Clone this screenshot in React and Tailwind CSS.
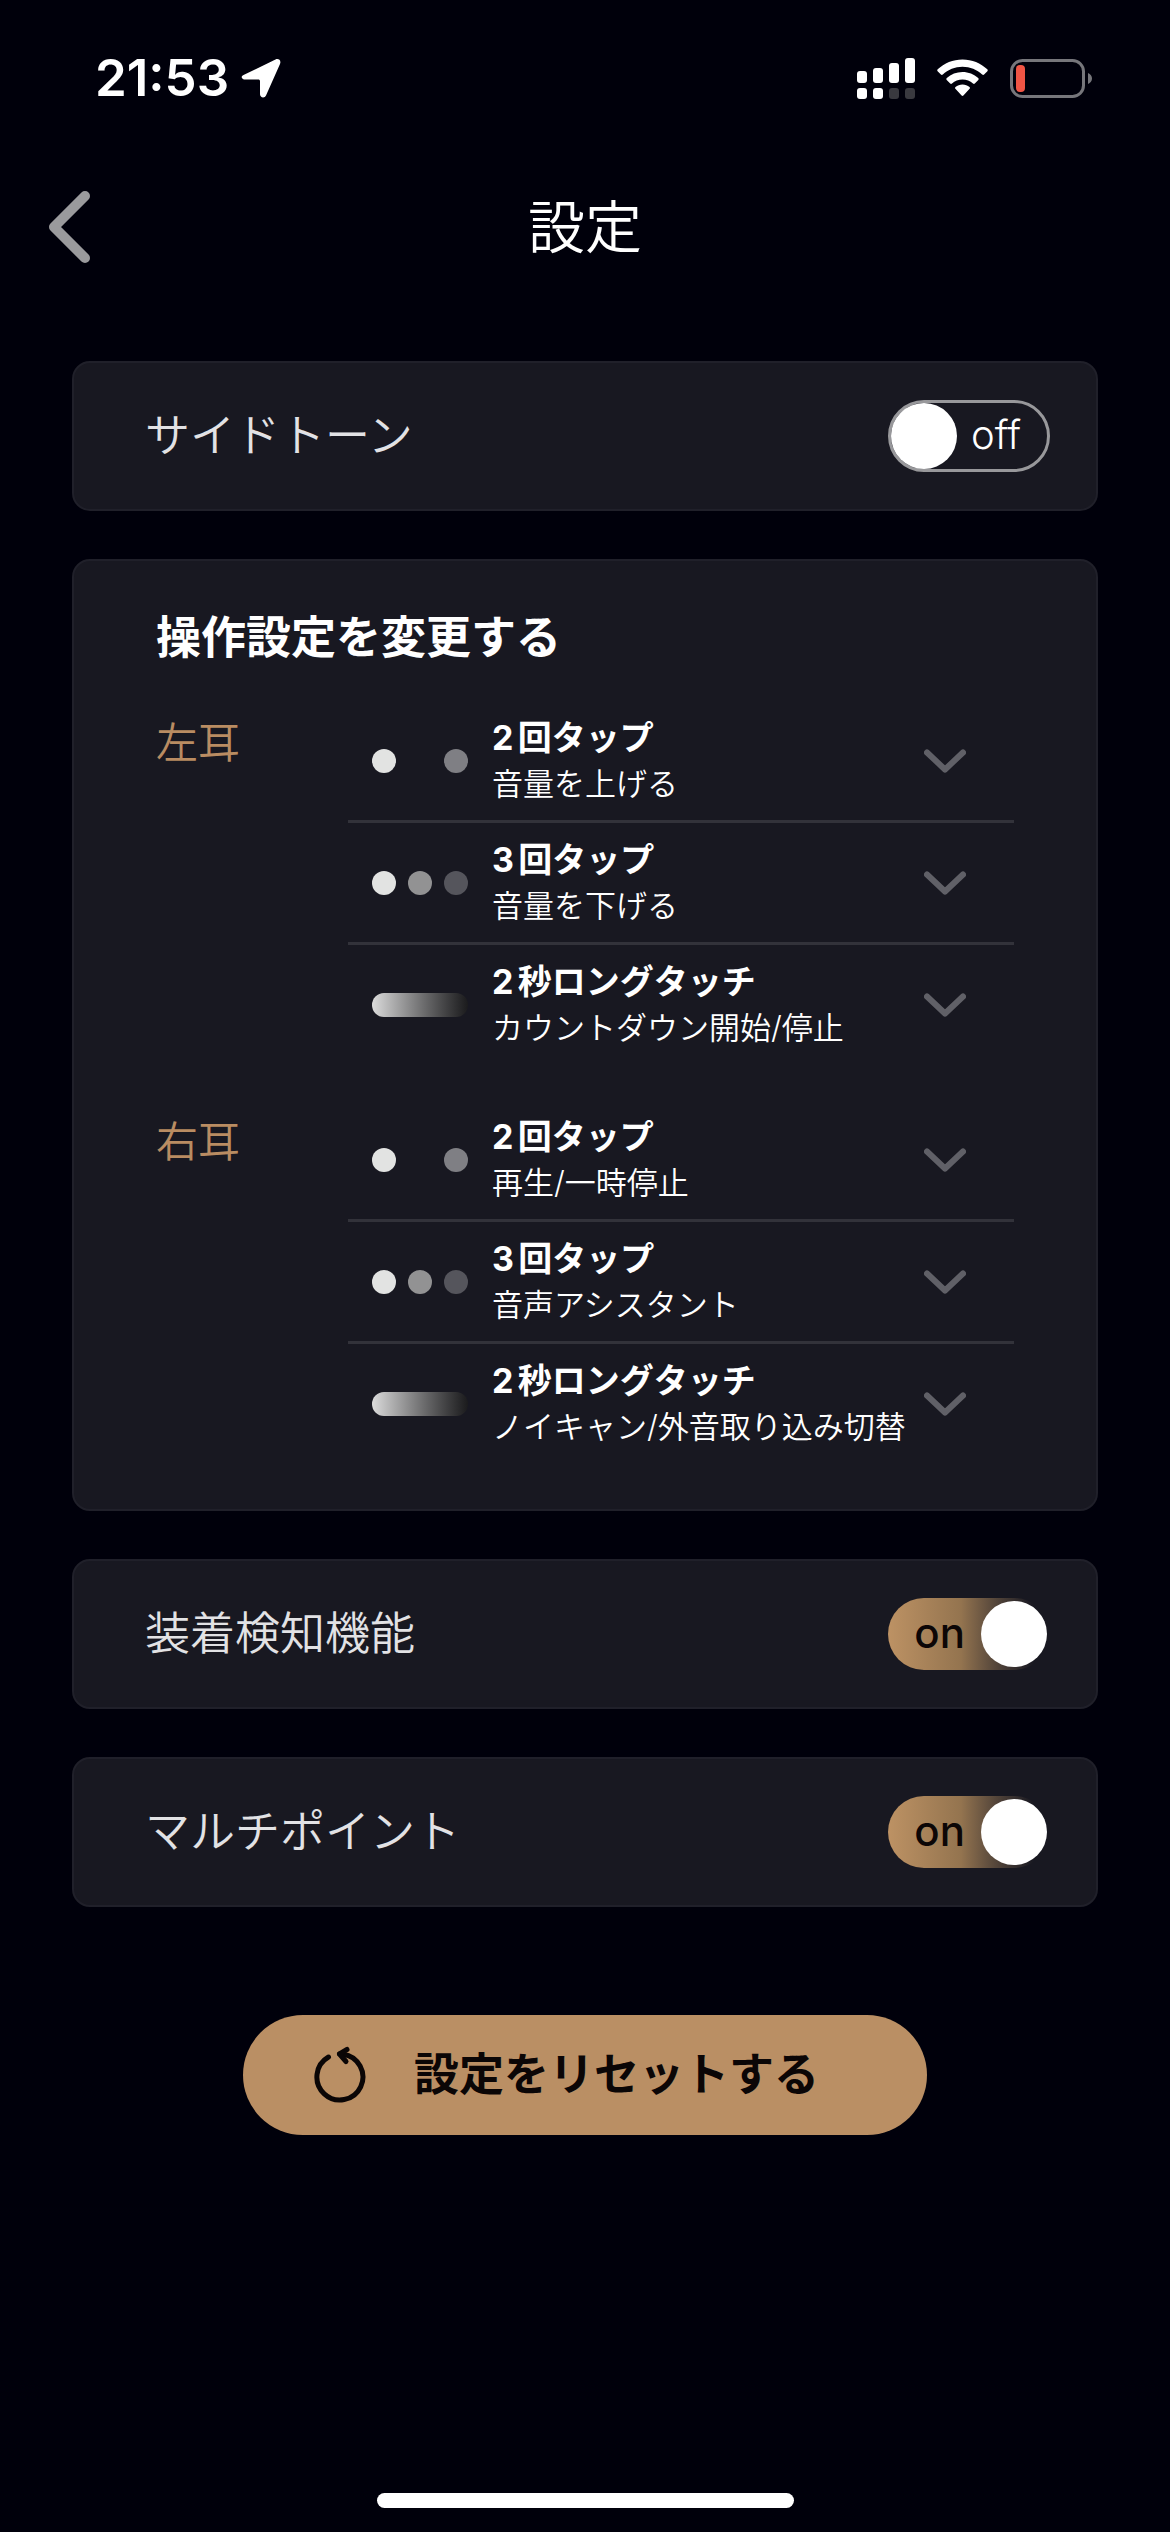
import React, { useState } from 'react';

const leftEar = [
  { icon: 'double', title: '2回タップ', action: '音量を上げる' },
  { icon: 'triple', title: '3回タップ', action: '音量を下げる' },
  { icon: 'long', title: '2秒ロングタッチ', action: 'カウントダウン開始/停止' },
];

const rightEar = [
  { icon: 'double', title: '2回タップ', action: '再生/一時停止' },
  { icon: 'triple', title: '3回タップ', action: '音声アシスタント' },
  { icon: 'long', title: '2秒ロングタッチ', action: 'ノイキャン/外音取り込み切替' },
];

const StatusBar = () => (
  <div className="flex items-center justify-between pt-12 pr-[78px] pl-[95px] text-white">
    <div className="flex items-center gap-3">
      <span className="text-[51px] leading-[60px] font-semibold">21:53</span>
      <svg className="h-10 w-10" viewBox="0 0 40 40" fill="currentColor">
        <path d="M2.500 17 34.500 1.500C37.500 0 40.500 2.500 39 6L25 37.500c-1.300 3-6 2.300-6-1.200V23.500c0-1.500-.5-2-2-2H4.500c-4.200 0-5-3.200-2-4.500z" />
      </svg>
    </div>
    <div className="flex items-center gap-[22px]">
      <svg className="h-[42px] w-[58px]" viewBox="0 0 58 42" fill="currentColor">
        <rect x="0" y="14" width="10" height="12" rx="3" />
        <rect x="16" y="11" width="10" height="15" rx="3" />
        <rect x="32" y="6" width="10" height="20" rx="3" />
        <rect x="48" y="1" width="10" height="25" rx="3" />
        <rect x="0" y="31" width="10" height="11" rx="3" />
        <rect x="16" y="31" width="10" height="11" rx="3" />
        <rect x="32" y="31" width="10" height="11" rx="3" fill="#39393f" />
        <rect x="48" y="31" width="10" height="11" rx="3" fill="#39393f" />
      </svg>
      <svg className="h-[38px] w-[51px]" viewBox="0 0 51 38" fill="currentColor">
        <path d="M25.500 0.500C35 0.500 43.800 4.200 50.300 10.300c.6.600.6 1.300.1 1.900l-3.300 3.300c-.5.500-1.300.5-1.900 0C40 10.700 33 7.800 25.500 7.800S11 10.700 5.800 15.500c-.6.500-1.400.5-1.900 0L.6 12.200c-.5-.6-.5-1.300.1-1.900C7.200 4.200 16 .5 25.500.5z" />
        <path d="M25.500 13c6 0 11.500 2.300 15.700 6.100.6.600.6 1.300.1 1.900l-3.500 3.500c-.5.500-1.200.5-1.800 0-2.800-2.500-6.500-4-10.500-4s-7.700 1.500-10.500 4c-.6.500-1.300.5-1.800 0L9.700 21c-.5-.6-.5-1.300.1-1.900C14 15.300 19.500 13 25.500 13z" />
        <path d="M25.500 25.500c2.700 0 5.100.9 7 2.500.6.500.6 1.300.1 1.800l-6.200 6.800c-.5.600-1.300.6-1.800 0l-6.200-6.800c-.5-.5-.5-1.300.1-1.800 1.900-1.600 4.300-2.500 7-2.500z" />
      </svg>
      <svg className="h-[39px] w-[82px]" viewBox="0 0 82 39" fill="none">
        <rect x="1.500" y="1.500" width="72" height="36" rx="11" stroke="#76767b" strokeWidth="3" />
        <path d="M78 14c2.500 1 4 3 4 5.500S80.500 24 78 25z" fill="#76767b" />
        <rect x="6" y="6" width="9" height="27" rx="4" fill="#f05545" />
      </svg>
    </div>
  </div>
);

const Toggle = ({ id, checked, onChange }) => (
  <div className="relative h-[72px] w-[162px] shrink-0">
    <input
      id={id}
      type="checkbox"
      role="switch"
      checked={checked}
      onChange={onChange}
      className="block size-full cursor-pointer appearance-none rounded-full border-3 border-[#98989b] checked:border-0 checked:bg-linear-to-r checked:from-[#bd9264] checked:via-[#94744f] checked:via-45% checked:to-[#181821] checked:to-90%"
    />
    <span
      aria-hidden="true"
      className={`pointer-events-none absolute inset-0 flex items-center px-[3px] leading-[60px] ${
        checked ? 'flex-row-reverse gap-4 text-[42px] font-medium text-[#0c0606]' : 'gap-[14px] text-[40px] font-light text-white'
      }`}
    >
      <span className="size-[66px] rounded-full bg-white" />
      <span className="pb-[2px]">{checked ? 'on' : 'off'}</span>
    </span>
  </div>
);

const Card = ({ className, children }) => (
  <section className={`rounded-[18px] border-2 border-[#20202a] bg-[#181821] ${className}`}>{children}</section>
);

const SwitchCard = ({ id, label, defaultOn = false }) => {
  const [on, setOn] = useState(defaultOn);

  return (
    <Card className="flex h-[150px] items-center justify-between pr-[46px] pl-[71px]">
      <label htmlFor={id} className="text-[45px] leading-[66px] font-[350] text-[#e2e2e5]">
        {label}
      </label>
      <Toggle id={id} checked={on} onChange={() => setOn(!on)} />
    </Card>
  );
};

const TapIcon = ({ type }) => {
  if (type === 'long') {
    return <span className="mr-6 h-6 w-24 shrink-0 rounded-full bg-linear-to-r from-[#dcdcdc] to-[#1b1b1d]" />;
  }

  return (
    <span className="mr-6 flex w-24 shrink-0 justify-between">
      <span className="size-6 rounded-full bg-[#e2e3e2]" />
      {type === 'triple' && <span className="size-6 rounded-full bg-[#929293]" />}
      <span className={`size-6 rounded-full ${type === 'triple' ? 'bg-[#55555c]' : 'bg-[#7f7f84]'}`} />
    </span>
  );
};

const EarSettings = ({ name, items }) => (
  <div className="flex">
    <h3 className="w-48 shrink-0 pt-3 text-[42px] leading-[60px] font-[350] text-[#b98c62]">{name}</h3>
    <ul className="min-w-0 flex-1 divide-y-3 divide-[#32323a]">
      {items.map((item) => (
        <li key={item.title}>
          <button type="button" className="flex h-[119px] w-full cursor-pointer items-center pr-12 pl-6 text-left">
            <TapIcon type={item.icon} />
            <span className="min-w-0 flex-1 whitespace-nowrap text-white">
              <span className="block text-[34px] leading-[46px] font-bold [text-autospace:normal]">{item.title}</span>
              <span className="block text-[31px] leading-[46px] font-[350]">{item.action}</span>
            </span>
            <svg className="h-6 w-[42px] shrink-0" viewBox="0 0 42 24" fill="none">
              <path d="M3 3.500 21 20.500 39 3.500" stroke="#606067" strokeWidth="6" strokeLinecap="round" strokeLinejoin="round" />
            </svg>
          </button>
        </li>
      ))}
    </ul>
  </div>
);

const App = () => {
  return (
    <div
      lang="ja"
      className="flex min-h-screen flex-col bg-[#00000b] font-['Inter','Noto_Sans_CJK_JP',sans-serif]"
    >
      <StatusBar />

      <header className="grid grid-cols-[1fr_auto_1fr] items-center px-12 pt-[75px]">
        <button type="button" aria-label="戻る" className="cursor-pointer justify-self-start">
          <svg className="h-[72px] w-[42px]" viewBox="0 0 42 72" fill="none">
            <path d="M37 5 6 36 37 67" stroke="#9a9a9d" strokeWidth="10" strokeLinecap="round" strokeLinejoin="round" />
          </svg>
        </button>
        <h1 className="pt-[2px] text-[57px] leading-[86px] font-[350] text-white">設定</h1>
      </header>

      <main className="flex flex-col gap-12 px-[72px] pt-[90px]">
        <SwitchCard id="sidetone" label="サイドトーン" />

        <Card className="px-[82px] pt-11 pb-[46px]">
          <h2 className="text-[45px] leading-[66px] font-bold text-white">操作設定を変更する</h2>
          <div className="mt-[30px] flex flex-col gap-9">
            <EarSettings name="左耳" items={leftEar} />
            <EarSettings name="右耳" items={rightEar} />
          </div>
        </Card>

        <SwitchCard id="wear-detection" label="装着検知機能" defaultOn />
        <SwitchCard id="multipoint" label="マルチポイント" defaultOn />
      </main>

      <button
        type="button"
        className="mx-auto mt-[108px] flex h-[120px] cursor-pointer items-center gap-12 rounded-full bg-[#ba8f64] pr-[108px] pl-[71px] text-[45px] leading-[66px] font-bold text-[#0b0606]"
      >
        <svg className="h-[60px] w-[52px]" viewBox="0 0 52 60" fill="none" stroke="currentColor" strokeWidth="5" strokeLinecap="round" strokeLinejoin="round">
          <path d="M14.500 12A23 23 0 1 0 29 9.200L25.500 9" />
          <path d="M33 4.500 25.500 9l6.500 7.500" />
        </svg>
        設定をリセットする
      </button>

      <div className="mx-auto mt-auto mb-6 h-[15px] w-[417px] rounded-full bg-white" />
    </div>
  );
};

export default App;
